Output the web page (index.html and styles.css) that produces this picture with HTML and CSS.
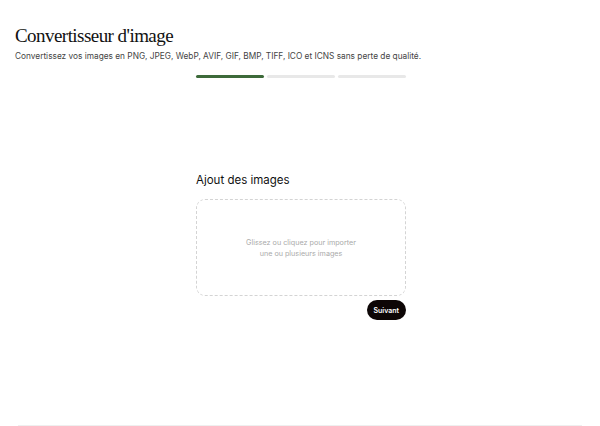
FILE: index.html
```html
<!DOCTYPE html>
<html>
    <head>
        <title>Convertisseur d'image</title>
        <link rel="stylesheet" href="styles.css">
    </head>
    <body>
        <div class="page">
            <header class="head">
                <h1 class="title">Convertisseur d'image</h1>
                <p class="subtitle">Convertissez vos images en PNG, JPEG, WebP, AVIF, GIF, BMP, TIFF, ICO et ICNS sans perte de qualité.</p>
            </header>
            <div class="steps">
                <span class="step done"></span>
                <span class="step"></span>
                <span class="step"></span>
            </div>
            <main class="panel">
                <h2 class="panel-title">Ajout des images</h2>
                <div class="drop">
                    <p>Glissez ou cliquez pour importer<br>une ou plusieurs images</p>
                </div>
                <div class="actions">
                    <button class="next" type="button">Suivant</button>
                </div>
            </main>
        </div>
        <footer class="foot"></footer>
    </body>
</html>
```

FILE: styles.css
```css
body{margin:0px; padding:0px; background:#fff; font-family:"Inter", "Liberation Sans", sans-serif; color:#111;}
body,html{height:100%; width:100%;}
.page{height:425px; display:flex; flex-direction:column; padding:0 14px 0 16px; box-sizing:border-box;}
.head{padding-top:24px; margin-left:-1px;}
.title{margin:0; font-family:"Liberation Serif", serif; font-weight:normal; font-size:19px; line-height:24px; letter-spacing:-0.55px;}
.subtitle{margin:2px 0 0 0; font-size:8.3px; line-height:12px; color:#444;}
.steps{display:flex; gap:3px; width:210px; margin:13px auto 0 auto;}
.step{flex:1; height:3px; border-radius:2px; background:#e8e8e8;}
.step.done{background:#3d6a3a;}
.panel{width:210px; margin:94px auto 0 auto;}
.panel-title{margin:0; font-size:11.5px; font-weight:normal; line-height:16px;}
.drop{height:95px; margin-top:11px; border:1px dashed #d4d4d4; border-radius:9px; display:flex; align-items:center; justify-content:center;}
.drop p{margin:0; text-align:center; font-size:7.2px; line-height:11px; color:#aaa;}
.actions{display:flex; justify-content:flex-end; margin-top:4px;}
.next{border:none; background:#0d0606; color:#fff; font-family:inherit; font-size:7px; font-weight:600; height:20px; padding:0 7px; border-radius:10px;}
.foot{margin:0 18px; border-top:1px solid #efefef;}
```
